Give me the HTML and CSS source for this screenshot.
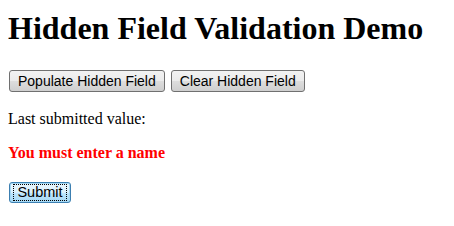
FILE: index.html
```html
<!DOCTYPE html>
<html>

<head>
	<title>Hidden Field Validation Demo</title>
	<meta charset="UTF-8">
	<link rel="stylesheet" href="styles.css">
</head>

<body>
	<h1>Hidden Field Validation Demo</h1>
	<form>
		<div class="actions">
			<button type="button" class="btn">Populate Hidden Field</button>
			<button type="button" class="btn">Clear Hidden Field</button>
		</div>
		<p class="last">Last submitted value: <span id="value"></span></p>
		<p class="error">You must enter a name</p>
		<div class="submit-row">
			<button type="submit" class="btn btn-focus"><span class="focus-ring">Submit</span></button>
		</div>
	</form>
</body>

</html>
```

FILE: styles.css
```css
body {
	margin: 8px;
	font-family: "Liberation Serif", "Times New Roman", serif;
	font-size: 16px;
	color: #000;
	background: #fff;
}

h1 {
	font-size: 32px;
	font-weight: bold;
	margin: 2px 0 23px 0;
	line-height: 37px;
}

form {
	margin-left: 1px;
}

.actions {
	display: flex;
	gap: 6px;
}

.btn {
	font-family: "Liberation Sans", Arial, sans-serif;
	font-size: 14px;
	color: #000;
	height: 22px;
	padding: 0 8px;
	border: 1px solid #707070;
	border-radius: 3px;
	background: linear-gradient(to bottom, #f2f2f2 0%, #ebebeb 50%, #dddddd 51%, #cfcfcf 100%);
	margin: 0;
	line-height: 18px;
}

.last {
	margin: 18px 0 0 -1px;
	line-height: 18px;
}

.error {
	margin: 16px 0 0 -1px;
	line-height: 18px;
	color: #f00;
	font-weight: bold;
}

.submit-row {
	margin-top: 20px;
	display: flex;
}

.btn-focus {
	border-color: #3c7fb1;
	padding: 0 3px;
	height: 21px;
	font-size: 14.5px;
	box-shadow: inset 0 0 0 1px #a6d9f4;
	background: linear-gradient(to bottom, #eaf6fd 0%, #d9f0fc 50%, #bee6fd 51%, #a7d9f5 100%);
	width: 62px;
}

.focus-ring {
	display: block;
	border: 1px dotted #000;
	padding: 0 1px;
	line-height: 15px;
}
```
